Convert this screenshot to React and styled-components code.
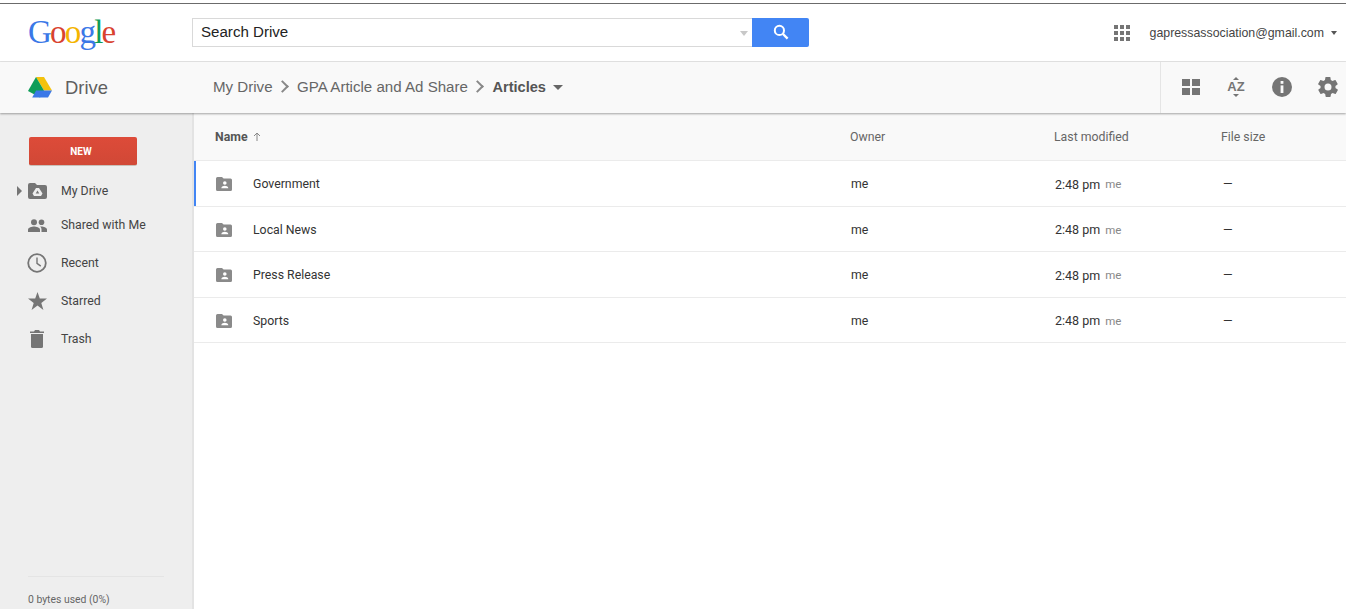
import styled, { createGlobalStyle } from 'styled-components'

const folders = ['Government', 'Local News', 'Press Release', 'Sports']

const GlobalStyle = createGlobalStyle`
  html, body {
    margin: 0;
    height: 100%;
    overflow: hidden;
    background: #fff;
    font-family: 'Roboto', 'Liberation Sans', sans-serif;
  }
  #root {
    height: 100%;
  }
`

export default function App() {
  return (
    <Page>
      <GlobalStyle />
      <TopRule />
      <Header>
        <Logo>
          <Letter $color="#3b78e7">G</Letter>
          <Letter $color="#d9432f">o</Letter>
          <Letter $color="#f4b400">o</Letter>
          <Letter $color="#3b78e7">g</Letter>
          <Letter $color="#0f9d58">l</Letter>
          <Letter $color="#d9432f">e</Letter>
        </Logo>
        <SearchBox>
          <SearchInput>Search Drive</SearchInput>
          <SearchCaret />
          <SearchButton>
            <svg width="16" height="16" viewBox="0 0 16 16">
              <circle cx="6.4" cy="6.4" r="4.6" fill="none" stroke="#fff" strokeWidth="2" />
              <path d="M10 10l4.6 4.6" stroke="#fff" strokeWidth="2.4" />
            </svg>
          </SearchButton>
        </SearchBox>
        <Account>
          <AppsGrid>
            {Array.from({ length: 9 }).map((_, i) => (
              <AppDot key={i} />
            ))}
          </AppsGrid>
          <Email>gapressassociation@gmail.com</Email>
          <SmallCaret />
        </Account>
      </Header>
      <SubHeader>
        <Brand>
          <svg width="24" height="21" viewBox="0 0 24 21">
            <path d="M8 0h8l8 13.6h-8z" fill="#f4c20d" />
            <path d="M8 0l8 13.6-4 7L0 14z" fill="#0f9d58" />
            <path d="M4.2 20.6l3.9-7H24l-4 7z" fill="#3b78e7" />
          </svg>
          <BrandName>Drive</BrandName>
        </Brand>
        <Crumbs>
          <Crumb>My Drive</Crumb>
          <Chevron />
          <Crumb>GPA Article and Ad Share</Crumb>
          <Chevron />
          <Crumb $current>Articles</Crumb>
          <CrumbCaret />
        </Crumbs>
        <Tools>
          <Tool>
            <svg width="18" height="16" viewBox="0 0 18 16" fill="#757575">
              <rect width="8" height="7" />
              <rect x="10" width="8" height="7" />
              <rect y="9" width="8" height="7" />
              <rect x="10" y="9" width="8" height="7" />
            </svg>
          </Tool>
          <Tool>
            <SortIcon>
              <svg width="6" height="3" viewBox="0 0 6 3"><path d="M3 0l3 3H0z" fill="#757575" /></svg>
              <SortLetters>AZ</SortLetters>
              <svg width="6" height="3" viewBox="0 0 6 3"><path d="M0 0h6L3 3z" fill="#757575" /></svg>
            </SortIcon>
          </Tool>
          <Tool>
            <svg width="20" height="20" viewBox="0 0 20 20">
              <circle cx="10" cy="10" r="10" fill="#757575" />
              <rect x="8.6" y="4" width="2.8" height="2.8" fill="#f9f9f9" />
              <rect x="8.6" y="8.4" width="2.8" height="7.6" fill="#f9f9f9" />
            </svg>
          </Tool>
          <Tool>
            <svg width="24" height="24" viewBox="0 0 24 24">
              <path
                fill="#757575"
                d="M19.4 13c.1-.3.1-.7.1-1s0-.7-.1-1l2.1-1.6c.2-.2.2-.4.1-.6l-2-3.5c-.1-.2-.4-.3-.6-.2l-2.5 1c-.5-.4-1.100-.7-1.700-1l-.4-2.700c0-.2-.2-.4-.5-.4h-4c-.2 0-.5.2-.5.4l-.4 2.700c-.6.2-1.100.6-1.700 1l-2.500-1c-.2-.1-.5 0-.6.2l-2 3.500c-.1.2-.1.500.1.600L4.600 11c0 .3-.1.700-.1 1s0 .7.1 1l-2.100 1.600c-.2.200-.2.400-.1.600l2 3.500c.1.200.4.300.6.200l2.500-1c.5.400 1.100.700 1.700 1l.4 2.700c0 .2.200.4.500.4h4c.2 0 .5-.2.500-.4l.4-2.700c.6-.2 1.100-.6 1.700-1l2.500 1c.2.100.5 0 .6-.2l2-3.500c.1-.2.100-.5-.1-.6zM12 15.500a3.500 3.500 0 1 1 0-7 3.500 3.500 0 0 1 0 7z"
              />
            </svg>
          </Tool>
        </Tools>
      </SubHeader>
      <Body>
        <Sidebar>
          <NewButton>NEW</NewButton>
          <NavList>
            <NavItem $height={34}>
              <Expander />
              <NavIcon>
                <svg width="19" height="16" viewBox="0 0 19 16">
                  <path d="M0 2a2 2 0 0 1 2-2h5l2 2h8a2 2 0 0 1 2 2v10a2 2 0 0 1-2 2H2a2 2 0 0 1-2-2z" fill="#757575" />
                  <path d="M8 5h3l3.500 5.500-1.500 2.500H6l-1.500-2.500z" fill="#eee" />
                  <path d="M9.500 7.500l1.800 3H7.700z" fill="#757575" />
                </svg>
              </NavIcon>
              <NavLabel>My Drive</NavLabel>
            </NavItem>
            <NavItem $height={34}>
              <NavIcon>
                <svg width="19" height="13" viewBox="0 0 19 13" fill="#757575">
                  <circle cx="6" cy="3.200" r="3" />
                  <circle cx="13.500" cy="3.200" r="2.800" />
                  <path d="M0 13v-2.500C0 8.300 4 7.400 6 7.400s6 .9 6 3.100V13z" />
                  <path d="M13.500 13v-2.500c0-1.300-.6-2.300-1.500-3 .6-.1 1.100-.1 1.500-.1 1.800 0 5.500.9 5.500 3.100V13z" />
                </svg>
              </NavIcon>
              <NavLabel>Shared with Me</NavLabel>
            </NavItem>
            <NavItem $height={42}>
              <NavIcon>
                <svg width="20" height="20" viewBox="0 0 20 20" fill="none" stroke="#757575">
                  <circle cx="10" cy="10" r="8.800" strokeWidth="1.800" />
                  <path d="M10 4.500v5.800l3.800 2.800" strokeWidth="1.400" />
                </svg>
              </NavIcon>
              <NavLabel>Recent</NavLabel>
            </NavItem>
            <NavItem $height={34}>
              <NavIcon>
                <svg width="19" height="18" viewBox="0 0 19 18">
                  <path d="M9.500 0l2.300 6.600H19l-5.700 4.300 2.100 7-5.900-4.300-5.900 4.300 2.100-7L0 6.600h7.200z" fill="#757575" />
                </svg>
              </NavIcon>
              <NavLabel>Starred</NavLabel>
            </NavItem>
            <NavItem $height={42}>
              <NavIcon>
                <svg width="14" height="18" viewBox="0 0 14 18" fill="#757575">
                  <path d="M0 1.500h4L5 0h4l1 1.500h4V3H0z" />
                  <path d="M1 4h12v12.500a1.500 1.500 0 0 1-1.500 1.500h-9A1.500 1.500 0 0 1 1 16.500z" />
                </svg>
              </NavIcon>
              <NavLabel>Trash</NavLabel>
            </NavItem>
          </NavList>
          <Quota>
            <QuotaText>0 bytes used (0%)</QuotaText>
          </Quota>
        </Sidebar>
        <Main>
          <TableHead>
            <NameHead>
              Name
              <svg width="8" height="9" viewBox="0 0 8 9" fill="none" stroke="#888">
                <path d="M4 9V1M1 4l3-3 3 3" />
              </svg>
            </NameHead>
            <HeadCell>Owner</HeadCell>
            <HeadCell>Last modified</HeadCell>
            <HeadCell>File size</HeadCell>
          </TableHead>
          {folders.map((name, i) => (
            <Row key={name} $selected={i === 0}>
              <NameCell>
                <svg width="16" height="14" viewBox="0 0 16 14">
                  <path d="M0 1.500A1.500 1.500 0 0 1 1.500 0H6l1.600 1.600h6.900A1.500 1.500 0 0 1 16 3.100v9.400a1.500 1.500 0 0 1-1.500 1.500h-13A1.500 1.500 0 0 1 0 12.500z" fill="#8a8a8a" />
                  <circle cx="8.800" cy="6" r="1.800" fill="#fff" />
                  <path d="M5.300 11.300c0-1.800 2.300-2.500 3.500-2.500s3.500.7 3.500 2.500z" fill="#fff" />
                </svg>
                <FileName>{name}</FileName>
              </NameCell>
              <Cell>me</Cell>
              <Cell>
                <Time>2:48 pm</Time>
                <Modifier>me</Modifier>
              </Cell>
              <DashCell>—</DashCell>
            </Row>
          ))}
        </Main>
      </Body>
    </Page>
  )
}

const Page = styled.div`
  height: 100%;
  display: flex;
  flex-direction: column;
  padding-top: 3px;
  box-sizing: border-box;
`

const TopRule = styled.div`
  height: 1px;
  background: #6b6b6b;
`

const Header = styled.header`
  height: 57px;
  flex: none;
  display: flex;
  align-items: center;
  border-bottom: 1px solid #e5e5e5;
  background: #fff;
`

const Logo = styled.div`
  width: 164px;
  margin-left: 28px;
  margin-top: -1px;
  font-family: 'Liberation Serif', serif;
  font-size: 33px;
  line-height: 40px;
  letter-spacing: -1.8px;
`

const Letter = styled.span`
  color: ${p => p.$color};
`

const SearchBox = styled.div`
  width: 617px;
  height: 29px;
  display: flex;
  align-items: stretch;
  margin-top: -1px;
`

const SearchInput = styled.div`
  flex: 1;
  border: 1px solid #d9d9d9;
  border-right: none;
  padding-left: 8px;
  font-size: 15.1px;
  line-height: 26px;
  color: #222;
  font-family: 'Liberation Sans', sans-serif;
`

const SearchCaret = styled.div`
  width: 22px;
  position: relative;
  border-top: 1px solid #d9d9d9;
  border-bottom: 1px solid #d9d9d9;
  &::after {
    content: '';
    position: absolute;
    left: 10px;
    top: 12px;
    border-left: 4px solid transparent;
    border-right: 4px solid transparent;
    border-top: 5px solid #c8c8c8;
  }
`

const SearchButton = styled.div`
  width: 57px;
  background: #4285f4;
  border-radius: 0 2px 2px 0;
  display: flex;
  align-items: center;
  justify-content: center;
`

const Account = styled.div`
  margin-left: auto;
  display: flex;
  align-items: center;
  padding-right: 9px;
`

const AppsGrid = styled.div`
  display: grid;
  grid-template-columns: repeat(3, 4px);
  grid-auto-rows: 4px;
  gap: 2px;
  margin-right: 20px;
`

const AppDot = styled.span`
  background: #757575;
`

const Email = styled.span`
  font-family: 'Liberation Sans', sans-serif;
  font-size: 12.35px;
  color: #444;
  margin-right: 7px;
`

const SmallCaret = styled.span`
  border-left: 3.5px solid transparent;
  border-right: 3.5px solid transparent;
  border-top: 4px solid #555;
`

const SubHeader = styled.div`
  height: 51px;
  flex: none;
  display: flex;
  align-items: center;
  background: #f9f9f9;
  box-shadow: 0 1px 2px rgba(0, 0, 0, 0.35);
  position: relative;
  z-index: 1;
`

const Brand = styled.div`
  width: 185px;
  margin-left: 28px;
  display: flex;
  align-items: center;
  gap: 13px;
`

const BrandName = styled.span`
  font-size: 18.4px;
  color: #5f5f5f;
  font-family: 'Liberation Sans', sans-serif;
`

const Crumbs = styled.div`
  display: flex;
  align-items: center;
  margin-top: -2px;
  font-family: 'Liberation Sans', sans-serif;
`

const Crumb = styled.span`
  font-size: ${p => (p.$current ? '14.6px' : '15.1px')};
  color: ${p => (p.$current ? '#555' : '#666')};
  font-weight: ${p => (p.$current ? 700 : 400)};
`

const Chevron = styled.span`
  width: 7px;
  height: 7px;
  margin: 0 10.5px 0 5px;
  border-top: 2px solid #888;
  border-right: 2px solid #888;
  transform: rotate(45deg);
`

const CrumbCaret = styled.span`
  margin-left: 7px;
  margin-top: 2px;
  border-left: 5px solid transparent;
  border-right: 5px solid transparent;
  border-top: 5px solid #666;
`

const Tools = styled.div`
  margin-left: auto;
  width: 186px;
  height: 100%;
  box-sizing: border-box;
  border-left: 1px solid #e5e5e5;
  display: flex;
  align-items: center;
  padding-left: 11px;
  margin-top: -1px;
`

const Tool = styled.div`
  width: 46px;
  flex: none;
  display: flex;
  justify-content: center;
  &:first-child {
    width: 38px;
    margin-right: 3px;
  }
`

const SortIcon = styled.div`
  display: flex;
  flex-direction: column;
  align-items: center;
  gap: 1px;
`

const SortLetters = styled.span`
  font-family: 'Liberation Sans', sans-serif;
  font-size: 13px;
  font-weight: 700;
  line-height: 12px;
  color: #757575;
`

const Body = styled.div`
  flex: 1;
  min-height: 0;
  display: flex;
`

const Sidebar = styled.aside`
  width: 194px;
  flex: none;
  box-sizing: border-box;
  background: #eee;
  border-right: 2px solid #e3e3e3;
  padding-top: 24px;
  display: flex;
  flex-direction: column;
`

const NewButton = styled.div`
  width: 108px;
  height: 28px;
  margin-left: 29px;
  box-sizing: content-box;
  background: linear-gradient(#dd4b39, #d14836);
  border-bottom: 1px solid #c9c0b8;
  border-radius: 2px;
  color: #fff;
  font-size: 10px;
  font-weight: 700;
  line-height: 29px;
  text-indent: -4px;
  text-align: center;
`

const NavList = styled.nav`
  margin-top: 8px;
  flex: 1;
`

const NavItem = styled.div`
  height: ${p => p.$height}px;
  position: relative;
  display: flex;
  align-items: center;
  padding-left: 27px;
`

const Expander = styled.span`
  position: absolute;
  left: 17px;
  top: 12px;
  border-top: 5px solid transparent;
  border-bottom: 5px solid transparent;
  border-left: 5px solid #757575;
`

const NavIcon = styled.span`
  width: 20px;
  display: flex;
  justify-content: center;
  margin-right: 14px;
`

const NavLabel = styled.span`
  font-size: 12.3px;
  color: #444;
`

const Quota = styled.div`
  margin: 0 28px;
  border-top: 1px solid #e4e4e4;
  height: 33px;
  box-sizing: border-box;
  padding-top: 13px;
  line-height: 16px;
`

const QuotaText = styled.span`
  font-size: 10.4px;
  color: #666;
  white-space: nowrap;
`

const Main = styled.main`
  flex: 1;
  min-width: 0;
`

const TableHead = styled.div`
  height: 47px;
  display: grid;
  grid-template-columns: 656px 204px 167px 1fr;
  align-items: center;
  background: #f9f9f9;
  border-bottom: 1px solid #ebebeb;
  font-size: 12.3px;
  color: #666;
`

const HeadCell = styled.div`
  margin-top: 0;
`

const NameHead = styled.div`
  display: flex;
  align-items: center;
  gap: 5px;
  padding-left: 21px;
  font-weight: 700;
  color: #555;
`

const Row = styled.div`
  height: 42.5px;
  padding-top: 2px;
  box-sizing: content-box;
  display: grid;
  grid-template-columns: 656px 204px 167px 1fr;
  align-items: center;
  border-bottom: 1px solid #ebebeb;
  box-shadow: ${p => (p.$selected ? 'inset 2px 0 0 #4285f4' : 'none')};
  font-size: 12.3px;
  color: #333;
`

const NameCell = styled.div`
  display: flex;
  align-items: center;
  padding-left: 22px;
  gap: 21px;
`

const FileName = styled.span`
  color: #333;
`

const Cell = styled.div`
  display: flex;
  align-items: center;
  padding-left: 1px;
`

const DashCell = styled(Cell)`
  padding-left: 2px;
`

const Time = styled.span`
  font-size: 12.5px;
  margin-right: 5px;
`

const Modifier = styled.span`
  font-size: 11.5px;
  color: #888;
`
